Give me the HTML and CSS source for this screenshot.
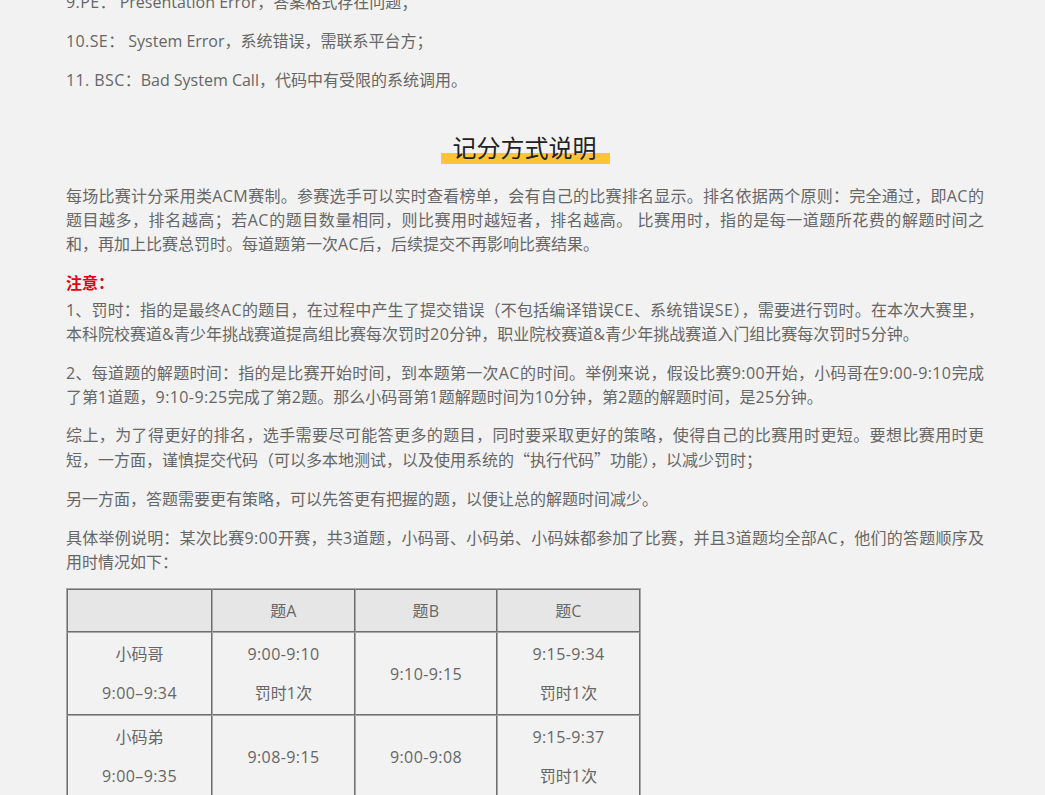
FILE: index.html
```html
<!DOCTYPE html>
<html lang="zh-CN">
<head>
    <meta charset="UTF-8">
    <meta name="viewport" content="width=device-width, initial-scale=1.0">
    <title>记分方式说明</title>
    <link rel="stylesheet" href="styles.css">
</head>
<body>
    <div class="container">
        <p class="first-line"><span class="en">9.PE</span>： Presentation Error，答案格式存在问题；</p>
        <p><span class="en">10.SE</span>： System Error，系统错误，需联系平台方；</p>
        <p><span class="en">11. BSC</span>：Bad System Call，代码中有受限的系统调用。</p>

        <h2 class="title"><span>记分方式说明</span></h2>

        <p>每场比赛计分采用类<span class="en">ACM</span>赛制。参赛选手可以实时查看榜单，会有自己的比赛排名显示。排名依据两个原则：完全通过，即<span class="en">AC</span>的题目越多，排名越高；若<span class="en">AC</span>的题目数量相同，则比赛用时越短者，排名越高。 比赛用时，指的是每一道题所花费的解题时间之和，再加上比赛总罚时。每道题第一次<span class="en">AC</span>后，后续提交不再影响比赛结果。</p>
        <p class="note"><strong>注意：</strong></p>
        <p>1、罚时：指的是最终<span class="en">AC</span>的题目，在过程中产生了提交错误（不包括编译错误<span class="en">CE</span>、系统错误<span class="en">SE</span>），需要进行罚时。在本次大赛里，本科院校赛道<span class="en">&amp;</span>青少年挑战赛道提高组比赛每次罚时<span class="en">20</span>分钟，职业院校赛道<span class="en">&amp;</span>青少年挑战赛道入门组比赛每次罚时<span class="en">5</span>分钟。</p>
        <p>2、每道题的解题时间：指的是比赛开始时间，到本题第一次<span class="en">AC</span>的时间。举例来说，假设比赛<span class="en">9:00</span>开始，小码哥在<span class="en">9:00-9:10</span>完成了第<span class="en">1</span>道题，<span class="en">9:10-9:25</span>完成了第<span class="en">2</span>题。那么小码哥第<span class="en">1</span>题解题时间为<span class="en">10</span>分钟，第<span class="en">2</span>题的解题时间，是<span class="en">25</span>分钟。</p>
        <p>综上，为了得更好的排名，选手需要尽可能答更多的题目，同时要采取更好的策略，使得自己的比赛用时更短。要想比赛用时更短，一方面，谨慎提交代码（可以多本地测试，以及使用系统的<span class="cjk">“</span>执行代码<span class="cjk">”</span>功能），以减少罚时；</p>
        <p>另一方面，答题需要更有策略，可以先答更有把握的题，以便让总的解题时间减少。</p>
        <p>具体举例说明：某次比赛<span class="en">9:00</span>开赛，共<span class="en">3</span>道题，小码哥、小码弟、小码妹都参加了比赛，并且<span class="en">3</span>道题均全部<span class="en">AC</span>，他们的答题顺序及用时情况如下：</p>

        <table class="score-table">
            <tr>
                <th></th>
                <th>题<span class="en">A</span></th>
                <th>题<span class="en">B</span></th>
                <th>题<span class="en">C</span></th>
            </tr>
            <tr>
                <td><p>小码哥</p><p class="en">9:00–9:34</p></td>
                <td><p class="en">9:00-9:10</p><p>罚时<span class="en">1</span>次</p></td>
                <td><p class="en">9:10-9:15</p></td>
                <td><p class="en">9:15-9:34</p><p>罚时<span class="en">1</span>次</p></td>
            </tr>
            <tr>
                <td><p>小码弟</p><p class="en">9:00–9:35</p></td>
                <td><p class="en">9:08-9:15</p></td>
                <td><p class="en">9:00-9:08</p></td>
                <td><p class="en">9:15-9:37</p><p>罚时<span class="en">1</span>次</p></td>
            </tr>
        </table>
    </div>
</body>
</html>
```

FILE: styles.css
```css
* {
    box-sizing: border-box;
}

html, body {
    height: 100%;
    overflow: hidden;
}

body {
    margin: 0;
    background-color: #f2f2f2;
    color: #666;
    font-family: 'Open Sans', 'Noto Sans CJK SC', sans-serif;
    font-size: 16px;
    line-height: 24px;
}

.container {
    width: 918px;
    margin-left: 66px;
}

.container > p {
    margin: 0 0 14.6px;
    text-align: justify;
}

/* latin runs are a bit wider in the original font */
.en {
    letter-spacing: 0.4px;
}

.cjk {
    font-family: 'Noto Sans CJK SC', sans-serif;
}

/* page is scrolled, first line is cut by the top edge */
.first-line {
    margin-top: -9.6px !important;
}

/* Section title */
.title {
    margin: 42.8px 0 20.1px;
    text-align: center;
    font-size: 24px;
    font-weight: normal;
    line-height: 28px;
    color: #222;
}

.title span {
    display: inline-block;
    padding: 0 13px 1.6px 12px;
    background: linear-gradient(to bottom, transparent 18.6px, #ffc338 18.6px);
}

.note {
    margin-bottom: 3.5px !important;
    color: #e60012;
}

/* Score table */
.score-table {
    border-collapse: separate;
    border-spacing: 0;
    border: 1px solid #a8a8a8;
    width: 575px;
    margin-top: 2px;
    table-layout: fixed;
    text-align: center;
}

.score-table th,
.score-table td {
    border: 1px solid #6e6e6e;
    border-top-color: #a8a8a8;
    border-left-color: #a8a8a8;
    padding: 9px 10px;
}

.score-table th {
    padding: 8.5px 10px;
    border-top-color: #6e6e6e;
    background-color: #e6e6e6;
    font-weight: normal;
}

.score-table th:first-child,
.score-table td:first-child {
    border-left-color: #6e6e6e;
}

.score-table th:nth-child(1) {
    width: 145px;
}

.score-table th:nth-child(2),
.score-table th:nth-child(4) {
    width: 143px;
}

.score-table th:nth-child(3) {
    width: 142px;
}

.score-table p {
    margin: 0 0 15px;
}

.score-table p:last-child {
    margin-bottom: 0;
}
```
